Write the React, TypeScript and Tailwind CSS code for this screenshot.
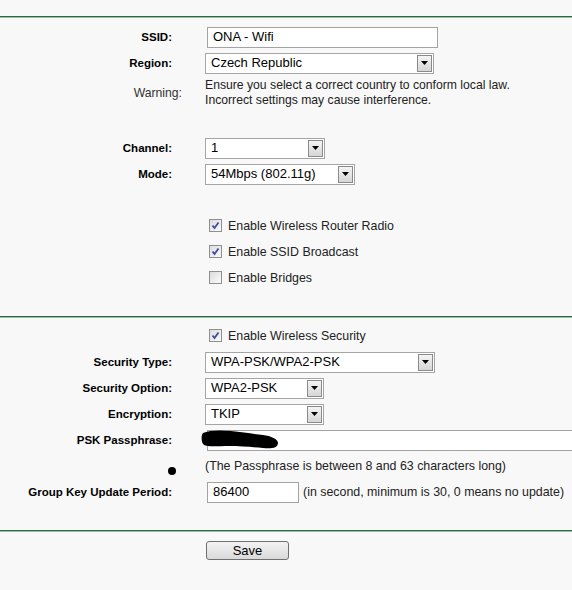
import React from 'react';

const font = "font-['Liberation_Sans',Arial,sans-serif]";

const Divider = () => (
  <div className="w-full">
    <div className="h-px bg-[#2d6a40]" />
    <div className="h-px bg-[#9dbca8]" />
  </div>
);

const Label: React.FC<{ children?: React.ReactNode }> = ({ children }) => (
  <div className="w-[172px] shrink-0 pt-[2px] text-right text-[11.5px] font-bold text-black">{children}</div>
);

const Row: React.FC<{ label?: string; children?: React.ReactNode; className?: string }> = ({ label, children, className = '' }) => (
  <div className={`flex h-[26px] items-center ${className}`}>
    <Label>{label}</Label>
    <div className="ml-[33px] flex items-center">{children}</div>
  </div>
);

const TextBox: React.FC<{ value: string; width: string }> = ({ value, width }) => (
  <div className={`ml-[2px] flex h-[21px] items-center border border-[#a3a3a3] bg-white pl-[5px] text-[13px] text-black ${width}`}>
    {value}
  </div>
);

const Select: React.FC<{ value: string; width: string }> = ({ value, width }) => (
  <div className={`flex h-[21px] items-center justify-between border border-[#a5a5a5] bg-white pl-[5px] pr-px text-[13px] text-black ${width}`}>
    <span>{value}</span>
    <span className="flex h-[17px] w-[15px] items-center justify-center border border-[#8a8a8a] bg-gradient-to-b from-[#f4f4f4] to-[#d6d6d6]">
      <svg width="7" height="4" viewBox="0 0 7 4">
        <path d="M0 0 H7 L3.5 4 Z" fill="#000" />
      </svg>
    </span>
  </div>
);

const Check: React.FC<{ checked?: boolean; text: string }> = ({ checked, text }) => (
  <div className="flex items-center">
    <span className="ml-[4px] flex h-[13px] w-[13px] items-center justify-center border border-[#8f8f8f] bg-gradient-to-br from-[#dcdcdc] to-[#fbfbfb]">
      {checked && (
        <svg width="9" height="9" viewBox="0 0 9 9">
          <path d="M1.5 4.5 L3.5 7 L7.5 1.5" fill="none" stroke="#3b4d9b" strokeWidth="1.8" />
        </svg>
      )}
    </span>
    <span className="ml-[6px] text-[12.4px] text-[#222]">{text}</span>
  </div>
);

export default function App() {
  return (
    <div className={`${font} min-h-[590px] w-full overflow-hidden bg-[#f8f8f8] text-[12.4px] text-[#222]`}>
      <div className="h-[16px]" />
      <Divider />

      <div className="mt-[6px]">
        <Row label="SSID:">
          <TextBox value="ONA - Wifi" width="w-[231px]" />
        </Row>
        <Row label="Region:">
          <Select value="Czech Republic" width="w-[229px]" />
        </Row>
        <div className="mt-[2px] flex items-center">
          <div className="w-[182px] shrink-0 text-right text-[12.2px] text-[#333]">Warning:</div>
          <div className="ml-[23px] text-[12.2px] leading-[15px] text-[#222]">
            Ensure you select a correct country to conform local law.
            <br />
            Incorrect settings may cause interference.
          </div>
        </div>

        <Row label="Channel:" className="mt-[27px]">
          <Select value="1" width="w-[120px]" />
        </Row>
        <Row label="Mode:">
          <Select value="54Mbps (802.11g)" width="w-[150px]" />
        </Row>

        <div className="mt-[26px]">
          <Row>
            <Check checked text="Enable Wireless Router Radio" />
          </Row>
          <Row>
            <Check checked text="Enable SSID Broadcast" />
          </Row>
          <Row>
            <Check text="Enable Bridges" />
          </Row>
        </div>
      </div>

      <div className="mt-[25px]">
        <Divider />
      </div>

      <div className="mt-[5px]">
        <Row>
          <Check checked text="Enable Wireless Security" />
        </Row>
        <Row label="Security Type:">
          <Select value="WPA-PSK/WPA2-PSK" width="w-[230px]" />
        </Row>
        <Row label="Security Option:">
          <Select value="WPA2-PSK" width="w-[119px]" />
        </Row>
        <Row label="Encryption:">
          <Select value="TKIP" width="w-[119px]" />
        </Row>
        <Row label="PSK Passphrase:">
          <div className="relative">
            <TextBox value="" width="w-[380px]" />
            {/* redaction mark over the passphrase */}
            <svg className="absolute left-[-4px] top-[0px]" width="80" height="20" viewBox="0 0 80 20">
              <path
                d="M2 3 C8 0 20 0 30 1 C42 2 52 4 62 5 C70 6 77 9 77 13 C77 18 70 19 62 18 C50 17 40 16 28 16 C16 16 7 17 3 15 C0 13 0 5 2 3 Z"
                fill="#000"
              />
            </svg>
          </div>
        </Row>
        <div className="flex h-[26px] items-center">
          <div className="relative w-[172px] shrink-0">
            <span className="absolute right-[-4px] top-[1px] h-[8px] w-[8px] rounded-full bg-black" />
          </div>
          <div className="ml-[33px] whitespace-nowrap text-[12.4px] text-[#222]">(The Passphrase is between 8 and 63 characters long)</div>
        </div>
        <Row label="Group Key Update Period:">
          <TextBox value="86400" width="w-[92px]" />
          <span className="ml-[4px] whitespace-nowrap text-[12.4px] text-[#222]">(in second, minimum is 30, 0 means no update)</span>
        </Row>
      </div>

      <div className="mt-[25px]">
        <Divider />
      </div>

      <div className="ml-[206px] mt-[9px]">
        <button className="h-[19px] w-[83px] rounded-[3px] border border-[#707070] bg-gradient-to-b from-[#f3f3f3] to-[#dadada] text-[13px] leading-none text-black">
          Save
        </button>
      </div>
    </div>
  );
}
